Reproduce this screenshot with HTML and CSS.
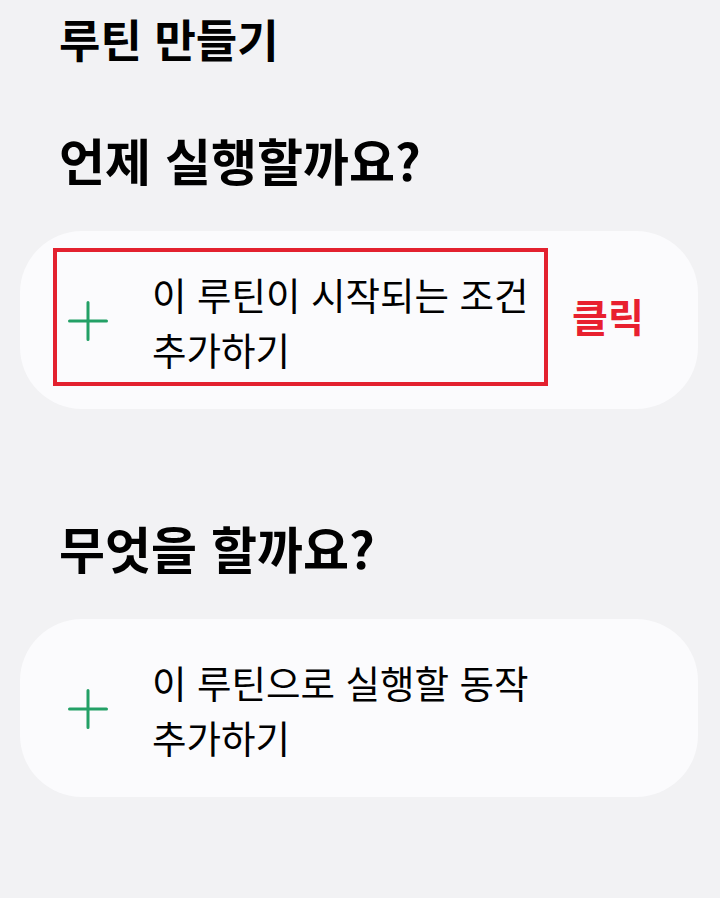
FILE: index.html
```html
<!DOCTYPE html>
<html lang="ko">
<head>
<meta charset="utf-8">
<link rel="stylesheet" href="styles.css">
</head>
<body>
<main class="page">
  <h1 class="title">루틴 만들기</h1>
  <section class="section">
    <h2 class="heading">언제 실행할까요?</h2>
    <div class="card">
      <div class="item highlight">
        <svg class="plus" viewBox="0 0 40 40" width="40" height="40"><path d="M20 1.5V38.5M1.5 20H38.5" stroke="#23a066" stroke-width="3" stroke-linecap="round" fill="none"/></svg>
        <p class="label">이 루틴이 시작되는 조건<br>추가하기</p>
      </div>
      <span class="click">클릭</span>
    </div>
  </section>
  <section class="section second">
    <h2 class="heading">무엇을 할까요?</h2>
    <div class="card">
      <div class="item">
        <svg class="plus" viewBox="0 0 40 40" width="40" height="40"><path d="M20 1.5V38.5M1.5 20H38.5" stroke="#23a066" stroke-width="3" stroke-linecap="round" fill="none"/></svg>
        <p class="label">이 루틴으로 실행할 동작<br>추가하기</p>
      </div>
    </div>
  </section>
</main>
</body>
</html>
```
FILE: styles.css
```css
html, body {
  margin: 0;
  padding: 0;
  background: #f2f2f4;
}
body {
  font-family: "Noto Sans CJK KR", "Noto Sans", sans-serif;
  color: #000;
  width: 720px;
  height: 898px;
  overflow: hidden;
}
.page {
  padding: 11px 22px 0 20px;
}
.title {
  margin: 0 0 0 39px;
  font-size: 45px;
  font-weight: 700;
  line-height: 56px;
}
.section {
  margin-top: 62px;
}
.section.second {
  margin-top: 108px;
}
.heading {
  margin: 0 0 42px 39px;
  font-size: 50px;
  font-weight: 700;
  line-height: 60px;
}
.card {
  background: #fbfbfd;
  border-radius: 62px;
  padding: 17px 0 23px 33px;
  display: flex;
  align-items: center;
}
.item {
  width: 495px;
  height: 138px;
  box-sizing: border-box;
  border: 4px solid transparent;
  padding-top: 7px;
  display: flex;
  align-items: center;
}
.item.highlight {
  border-color: #e3212f;
}
.plus {
  margin-left: 11px;
  flex: none;
}
.label {
  margin: 0 0 0 44px;
  font-size: 37.5px;
  line-height: 55px;
  font-weight: 400;
  color: #000;
}
.click {
  margin: 0 0 4px 24px;
  font-size: 39px;
  font-weight: 700;
  color: #e8202f;
}
```
